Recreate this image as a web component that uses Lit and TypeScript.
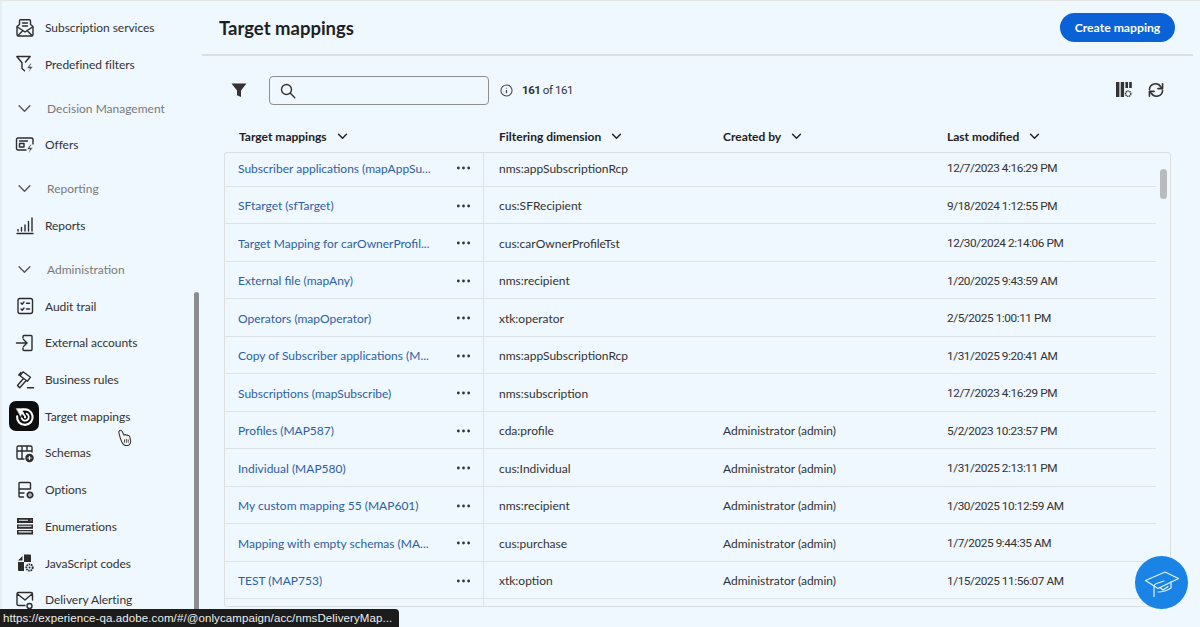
import { LitElement, html, css, svg } from "lit";
import { customElement } from "lit/decorators.js";

const ic = (c: unknown) => html`<svg class="ic" viewBox="0 0 20 20" fill="none" stroke="#2c2c2c" stroke-width="1.400" stroke-linecap="round" stroke-linejoin="round">${c}</svg>`;
const gear = (x: number, y: number) => svg`<circle cx=${x} cy=${y} r="2.600" fill="#eff7ff" stroke="#2c2c2c" stroke-width="1.900" stroke-dasharray="1.400 .6"/><circle cx=${x} cy=${y} r=".7" fill="#2c2c2c" stroke="none"/>`;
const bolt = svg`<path d="M15.500 9.500l-3.500 4.700h3l-1.600 4.300 4.300-5.700h-3l1.800-3.300z" fill="#2c2c2c" stroke="#eff7ff" stroke-width=".5"/>`;

const icons: Record<string, unknown> = {
  sub: ic(svg`<path d="M2 8.500v8a1.500 1.500 0 0 0 1.500 1.500h13a1.500 1.500 0 0 0 1.500-1.500v-8l-2.500-2V3a1.200 1.200 0 0 0-1.200-1.200H5.700A1.200 1.200 0 0 0 4.500 3v3.500z"/><path d="M2.500 9l7.500 5 7.500-5M3 17.500l5-5M17 17.500l-5-5M7.500 5h5M7.500 8h5"/>`),
  filt: ic(svg`<path d="M1.800 2.500h13.400l-4.700 5.500M1.800 2.500l5.200 6.300v5.700l2.500 2.200"/>${bolt}`),
  off: ic(svg`<path d="M11 15H3a1.500 1.500 0 0 1-1.500-1.500V4.500A1.500 1.500 0 0 1 3 3h13.500A1.500 1.500 0 0 1 18 4.500V9"/><rect x="4.500" y="8.500" width="4.500" height="3.500"/><path d="M4.500 6h8"/>${bolt}`),
  rep: ic(svg`<path d="M2 17.500h16M3 15v-1.500M6.500 15v-3.500M10 15V9M13.500 15V5.500M17 15V2"/>`),
  aud: ic(svg`<rect x="3" y="2.500" width="14.500" height="15" rx="2"/><path d="M6 7l1.200 1.200L9 6M11.500 7.300h3M6 13l1.200 1.200L9 12M11.500 13h3"/>`),
  ext: ic(svg`<path d="M8 5V3.500a1 1 0 0 1 1-1h7a1 1 0 0 1 1 1v13a1 1 0 0 1-1 1H9a1 1 0 0 1-1-1V15M1.500 10h10M8.500 6.500L12 10l-3.500 3.500"/>`),
  biz: ic(svg`<path d="M8 1.800l7.500 5.400-3 4-7.500-5.400zM8.500 8.500L2.500 15.500l2.200 2.300 6.300-7M5.800 2.500L3.800 5.200M12.500 17.800h6"/>`),
  sch: ic(svg`<path d="M9 16H3.500A1.500 1.500 0 0 1 2 14.500v-10A1.500 1.500 0 0 1 3.500 3h12A1.500 1.500 0 0 1 17 4.500V9M2 8h15M7 3v13M12 3v5"/><circle cx="14.500" cy="15" r="3.500" fill="#2c2c2c"/><path d="M12.800 15h3.400M14.500 13.300v3.400" stroke="#eff7ff" stroke-width="1"/>`),
  opt: ic(svg`<path d="M8.500 17H5a1 1 0 0 1-1-1V3.500a1 1 0 0 1 1-1h9.500a1 1 0 0 1 1 1V9H4M4 13h5"/>${gear(15, 15)}`),
  en: html`<svg class="ic" viewBox="0 0 20 20" fill="#2c2c2c"><path d="M2 2h16v5H2z"/><path d="M2 8.500h16v4.300H2z"/><path d="M2 14h16v4.500H2z"/><path d="M4 4.200h9M3.500 10.200h13M3.500 15.900h13" stroke="#eff7ff" stroke-width="1.100"/><path d="M15.500 4.200h1" stroke="#eff7ff"/></svg>`,
  js: html`<svg class="ic" viewBox="0 0 20 20" fill="#2c2c2c"><path d="M9 1.500h6a1 1 0 0 1 1 1V9H9z"/><path d="M7.500 3L3 7.500h4.500z"/><path d="M3 9h6v9H4a1 1 0 0 1-1-1z"/><circle cx="14.500" cy="14.500" r="3.200" stroke="#2c2c2c" stroke-width="1.800" fill="#eff7ff" stroke-dasharray="1.600 .7"/><circle cx="14.500" cy="14.500" r="1"/></svg>`,
  del: ic(svg`<path d="M10 15.500H3.500A1.500 1.500 0 0 1 2 14V4a1.500 1.500 0 0 1 1.500-1.500H16A1.500 1.500 0 0 1 17.500 4v6M2.500 4l7.500 6 7-6"/><circle cx="14.500" cy="16" r="2.500"/>`),
};

const targetIcon = html`<svg viewBox="0 0 20 20" width="21" height="21" fill="none" stroke="#fff" stroke-width="2" stroke-linecap="round" stroke-linejoin="round"><path d="M8 3.600A7.400 7.400 0 1 1 3 9.800"/><path d="M2.500 2.500l7 0-1.800 2.200 1.800 2.300-2.500.4-.5 2.300z" fill="#fff" stroke-width=".6"/><path d="M6.500 5l4 4.800" stroke-width="1.700"/><path d="M7.200 11.500a3.500 3.500 0 1 0 4.800-4.200" stroke-width="1.700"/><circle cx="10.500" cy="10.800" r="1.100" fill="#fff" stroke="none"/></svg>`;

type Item = { t: "i" | "h"; l: string; k?: string; a?: boolean };
const nav: Item[] = [
  { t: "i", l: "Subscription services", k: "sub" },
  { t: "i", l: "Predefined filters", k: "filt" },
  { t: "h", l: "Decision Management" },
  { t: "i", l: "Offers", k: "off" },
  { t: "h", l: "Reporting" },
  { t: "i", l: "Reports", k: "rep" },
  { t: "h", l: "Administration" },
  { t: "i", l: "Audit trail", k: "aud" },
  { t: "i", l: "External accounts", k: "ext" },
  { t: "i", l: "Business rules", k: "biz" },
  { t: "i", l: "Target mappings", a: true },
  { t: "i", l: "Schemas", k: "sch" },
  { t: "i", l: "Options", k: "opt" },
  { t: "i", l: "Enumerations", k: "en" },
  { t: "i", l: "JavaScript codes", k: "js" },
  { t: "i", l: "Delivery Alerting", k: "del" },
];

const rows = [
  ["Subscriber applications (mapAppSu...", "nms:appSubscriptionRcp", "", "12/7/2023 4:16:29 PM"],
  ["SFtarget (sfTarget)", "cus:SFRecipient", "", "9/18/2024 1:12:55 PM"],
  ["Target Mapping for carOwnerProfil...", "cus:carOwnerProfileTst", "", "12/30/2024 2:14:06 PM"],
  ["External file (mapAny)", "nms:recipient", "", "1/20/2025 9:43:59 AM"],
  ["Operators (mapOperator)", "xtk:operator", "", "2/5/2025 1:00:11 PM"],
  ["Copy of Subscriber applications (M...", "nms:appSubscriptionRcp", "", "1/31/2025 9:20:41 AM"],
  ["Subscriptions (mapSubscribe)", "nms:subscription", "", "12/7/2023 4:16:29 PM"],
  ["Profiles (MAP587)", "cda:profile", "Administrator (admin)", "5/2/2023 10:23:57 PM"],
  ["Individual (MAP580)", "cus:Individual", "Administrator (admin)", "1/31/2025 2:13:11 PM"],
  ["My custom mapping 55 (MAP601)", "nms:recipient", "Administrator (admin)", "1/30/2025 10:12:59 AM"],
  ["Mapping with empty schemas (MA...", "cus:purchase", "Administrator (admin)", "1/7/2025 9:44:35 AM"],
  ["TEST (MAP753)", "xtk:option", "Administrator (admin)", "1/15/2025 11:56:07 AM"],
];

const chev = html`<svg class="chev" viewBox="0 0 12 8" fill="none" stroke="#222" stroke-width="1.700" stroke-linecap="round" stroke-linejoin="round"><path d="M1.500 1.500L6 6l4.500-4.500"/></svg>`;
const kebab = html`<svg class="keb" viewBox="0 0 16 4" fill="#333"><circle cx="2.500" cy="2" r="1.500"/><circle cx="8" cy="2" r="1.500"/><circle cx="13.500" cy="2" r="1.500"/></svg>`;

@customElement("app-root")
export class AppRoot extends LitElement {
  static styles = css`
    :host { display: block; position: relative; width: 1200px; height: 627px; overflow: hidden; background: #eff7ff; font-family: "Lato", "Noto Sans", sans-serif; font-size: 12px; color: #2c2c2c; border-top: 1px solid #e6e6e6; box-sizing: border-box; }
    .app { display: flex; height: 626px; }
    .side { width: 202px; flex: none; padding-top: 8.200px; box-sizing: border-box; border-left: 2px solid #e9eef3; }
    .it { display: flex; align-items: center; height: 36.700px; padding-left: 13px; font-size: 12px; letter-spacing: -.05px; color: #333; white-space: nowrap; }
    .ic { width: 20px; height: 20px; flex: none; }
    .it .ic { margin-right: 10px; }
    .act { width: 30px; height: 30px; margin: 0 6px 0 -6px; border-radius: 7px; background: #0d0d0d; display: flex; align-items: center; justify-content: center; flex: none; }
    .hd { display: flex; align-items: center; height: 36.700px; margin-top: 7.300px; padding-left: 16px; color: #7a7a7a; font-size: 12px; white-space: nowrap; }
    .hd svg { width: 13px; height: 9px; margin-right: 16px; }
    .hd svg path { stroke: #555; stroke-width: 1.300; }
    .main { flex: 1; min-width: 0; padding-right: 7px; display: flex; flex-direction: column; }
    .top { height: 55px; border-bottom: 2px solid #dcdfe2; display: flex; align-items: center; justify-content: space-between; padding: 0 18px 0 17px; box-sizing: border-box; flex: none; }
    h1 { margin: 0; font-size: 18.500px; font-weight: 700; color: #1f1f1f; }
    .btn { height: 29px; width: 115px; justify-content: center; border-radius: 15px; background: #0a62d6; color: #fff; font-weight: 700; font-size: 12.200px; display: flex; align-items: center; }
    .tools { height: 65px; display: flex; align-items: center; padding: 3px 29px 0 29px; box-sizing: border-box; flex: none; }
    .fun { width: 16px; height: 16px; margin-right: 22px; }
    .search { width: 220px; height: 29px; margin-top: 1px; border: 1px solid #8f8f8f; border-radius: 4px; box-sizing: border-box; display: flex; align-items: center; padding-left: 10px; margin-right: 11px; }
    .search svg { width: 16px; height: 16px; }
    .info { width: 13px; height: 13px; margin-right: 9px; }
    .count { font-family: "Roboto", sans-serif; font-size: 11.500px; letter-spacing: -.45px; color: #333; flex: 1; }
    .count b { font-weight: 700; }
    .rt { display: flex; gap: 16px; align-items: center; }
    .rt svg { width: 16px; height: 16px; }
    .thead { display: grid; grid-template-columns: 260px 224px 224px 1fr; height: 31px; align-items: center; margin-left: 22px; flex: none; font-weight: 700; font-size: 12px; color: #222; margin-right: 22px; }
    .thead > div { display: flex; align-items: center; padding-left: 15px; gap: 10px; }
    .chev { width: 11px; height: 7px; }
    .tbl { margin-left: 22px; margin-right: 22px; border: 1px solid #dcdfe2; border-radius: 3px; height: 455px; overflow: hidden; flex: none; position: relative; box-sizing: border-box; }
    .body { margin-top: -3.750px; }
    .r { display: grid; grid-template-columns: 259px 224px 224px 1fr; height: 37.500px; align-items: center; font-size: 12px; color: #333; position: relative; }
    .r::after { content: ""; position: absolute; left: 0; right: 14px; bottom: 0; height: 1px; background: #dfe2e6; }
    .c1 { display: flex; align-items: center; justify-content: space-between; height: 100%; padding: 0 12px 0 13px; border-right: 1px solid #dfe2e6; box-sizing: border-box; }
    .lk { color: #2c5fa5; white-space: nowrap; overflow: hidden; }
    .keb { width: 15px; height: 4px; flex: none; }
    .c { padding-left: 15px; white-space: nowrap; }
    .d { font-family: "Roboto", sans-serif; letter-spacing: -.42px; font-size: 11.800px; }
    .sb1 { position: absolute; left: 1160px; top: 168px; width: 7px; height: 30px; border-radius: 4px; background: #b9bcbf; }
    .sb2 { position: absolute; left: 194px; top: 291px; width: 5px; height: 320px; border-radius: 3px; background: #8a8c8e; }
    .tip { position: absolute; left: 0; top: 608px; width: 399px; height: 19px; background: #1c1c1c; color: #eee; font-family: "Liberation Sans", sans-serif; font-size: 11.500px; line-height: 19px; padding-left: 3px; box-sizing: border-box; border-radius: 0 4px 0 0; white-space: nowrap; letter-spacing: .1px; }
    .fab { position: absolute; left: 1135px; top: 555px; width: 53px; height: 53px; border-radius: 50%; background: #1983e6; display: flex; align-items: center; justify-content: center; }
    .fab svg { width: 36px; height: 36px; }
    .cur { position: absolute; left: 117px; top: 428px; width: 15px; height: 18px; }
  `;

  render() {
    return html`
      <div class="app">
        <nav class="side">
          ${nav.map((n) =>
            n.t === "h"
              ? html`<div class="hd"><svg viewBox="0 0 12 8" fill="none" stroke-linecap="round" stroke-linejoin="round"><path d="M1 1.500L6 6.500l5-5"/></svg>${n.l}</div>`
              : html`<div class="it">${n.a ? html`<span class="act">${targetIcon}</span>` : icons[n.k!]}${n.l}</div>`
          )}
        </nav>
        <main class="main">
          <div class="top"><h1>Target mappings</h1><div class="btn">Create mapping</div></div>
          <div class="tools">
            <svg class="fun" viewBox="0 0 16 16" fill="#333"><path d="M.5 1.500h15L10 8.500v6.500l-4-1.800V8.500z"/></svg>
            <div class="search"><svg viewBox="0 0 16 16" fill="none" stroke="#333" stroke-width="1.400" stroke-linecap="round"><circle cx="6.500" cy="6.500" r="5"/><path d="M10.300 10.300l4.500 4.500"/></svg></div>
            <svg class="info" viewBox="0 0 14 14" fill="none" stroke="#444" stroke-width="1.100"><circle cx="7" cy="7" r="6"/><path d="M7 6.500v3.500M7 4v.8" stroke-width="1.300"/></svg>
            <div class="count"><b>161</b> of 161</div>
            <div class="rt">
              <svg viewBox="0 0 17 17" fill="#333"><path d="M0 0h3.600v16H0zM5 0h3.600v16H5zM10 0h2.800v6.500H10zM14 0h2.800v6.500H14z"/><circle cx="13" cy="12.500" r="2.800" fill="#eff7ff" stroke="#333" stroke-width="1.500" stroke-dasharray="1.400 .6"/></svg>
              <svg viewBox="0 0 17 17" fill="none" stroke="#333" stroke-width="1.700" stroke-linecap="round" stroke-linejoin="round"><path d="M1.500 8a6.500 6.500 0 0 1 12-3l1.500 2M15.500 9a6.500 6.500 0 0 1-12 3L2 10"/><path d="M15.500 1.800V7h-5M1.500 15.200V10h5"/></svg>
            </div>
          </div>
          <div class="thead">
            <div>Target mappings ${chev}</div><div>Filtering dimension ${chev}</div><div>Created by ${chev}</div><div>Last modified ${chev}</div>
          </div>
          <div class="tbl">
            <div class="body">
              ${rows.map((r) => html`<div class="r"><div class="c1"><span class="lk">${r[0]}</span>${kebab}</div><div class="c">${r[1]}</div><div class="c">${r[2]}</div><div class="c d">${r[3]}</div></div>`)}
              <div class="r"><div class="c1"></div></div>
            </div>
          </div>
        </main>
      </div>
      <div class="sb1"></div>
      <div class="sb2"></div>
      <svg class="cur" viewBox="0 0 16 19" fill="#f4f4f4" stroke="#333" stroke-width="1.100" stroke-linejoin="round"><path d="M3 1.500c1-.8 2 0 2.500 1l2 4 .5-.6c.8-.4 1.400 0 1.700.6.800-.5 1.500-.2 1.800.5.800-.4 1.600 0 2 1l1 4c.4 2-.6 5-3 5.500H9c-2 0-3-2-4-4L3.500 9.500 2 4c-.3-1 .2-2 1-2.500z"/><path d="M8 11v3.500M10 10.500v4M12 11v3.500" stroke-width=".9"/></svg>
      <div class="tip">https://experience-qa.adobe.com/#/@onlycampaign/acc/nmsDeliveryMap...</div>
      <div class="fab"><svg viewBox="0 0 36 36" fill="none" stroke="#e4f1fd" stroke-width="1.200" stroke-linejoin="round" stroke-linecap="round"><path d="M1.500 15.500L21 7l13.500 6.500L14 23.500z"/><path d="M10 31.500V22c0-2.500 2-3.500 4-4l6-2"/><path d="M27 16.800V23c-3 2-9 4-13 4"/><path d="M16 22.500l3 2.500 5-3.500"/></svg></div>
    `;
  }
}
